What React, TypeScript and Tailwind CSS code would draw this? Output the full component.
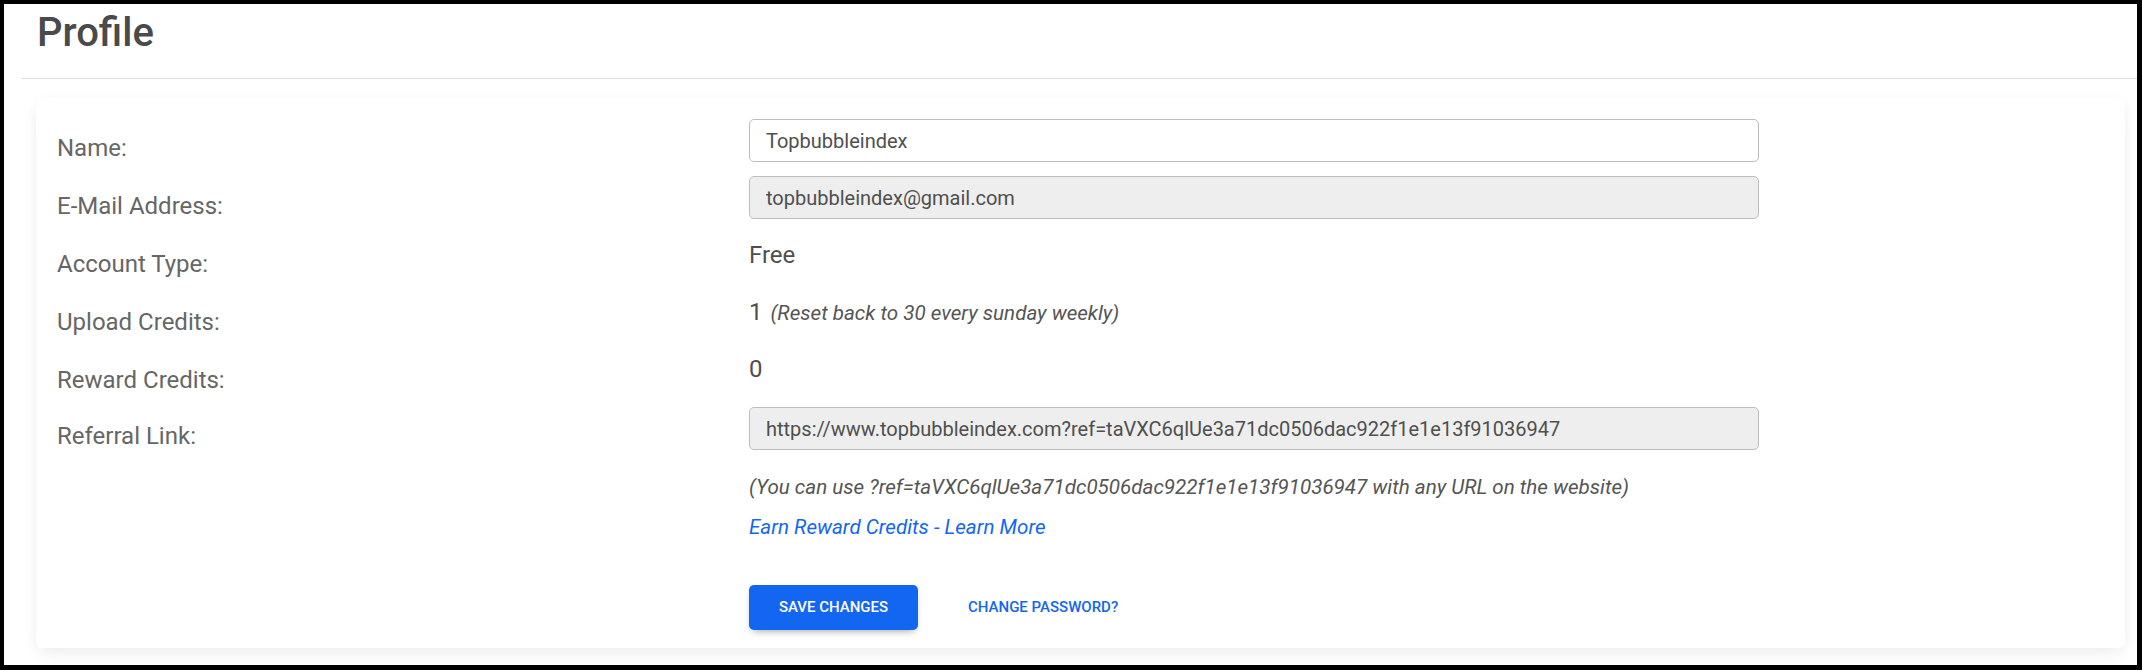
import React from "react";

type Row = {
  label: string;
  value: React.ReactNode;
  labelPad: string;
};

function TextField({ value, disabled = false }: { value: string; disabled?: boolean }) {
  return (
    <input
      type="text"
      defaultValue={value}
      readOnly={disabled}
      className={`h-[43px] w-[1010px] rounded-[5px] border border-[#bdbdbd] px-[16px] text-[20px] text-[#4f4f4f] outline-none ${
        disabled ? "bg-[#eeeeee]" : "bg-white"
      }`}
    />
  );
}

export default function App() {
  const referralCode = "taVXC6qlUe3a71dc0506dac922f1e1e13f91036947";

  const rows: Row[] = [
    { label: "Name:", labelPad: "pt-[11px]", value: <TextField value="Topbubbleindex" /> },
    {
      label: "E-Mail Address:",
      labelPad: "pt-[12px]",
      value: <TextField value="topbubbleindex@gmail.com" disabled />,
    },
    { label: "Account Type:", labelPad: "pt-[13px]", value: <span className="text-[24px]">Free</span> },
    {
      label: "Upload Credits:",
      labelPad: "pt-[14px]",
      value: (
        <span className="flex items-baseline gap-[8px]">
          <span className="text-[24px]">1</span>
          <span className="text-[20.6px] italic text-[#555]">(Reset back to 30 every sunday weekly)</span>
        </span>
      ),
    },
    { label: "Reward Credits:", labelPad: "pt-[15px]", value: <span className="text-[24px]">0</span> },
    {
      label: "Referral Link:",
      labelPad: "pt-[11px]",
      value: <TextField value={`https://www.topbubbleindex.com?ref=${referralCode}`} disabled />,
    },
  ];

  return (
    <div
      className="h-[670px] w-[2142px] bg-black pb-[5px] pl-[4px] pr-[5px] pt-[4px]"
      style={{ fontFamily: "Roboto, 'Noto Sans', Arial, sans-serif" }}
    >
      <div className="flex h-full flex-col bg-white">
        <div className="ml-[17px] h-[75px] border-b border-[#e0e0e0] pl-[16px] pt-[5px]">
          <h1 className="text-[40px] font-medium leading-[48px] text-[#4a4a4a]">Profile</h1>
        </div>

        <div className="flex min-h-0 flex-1 pb-[17px] pl-[32px] pr-[12px] pt-[19px]">
          <section className="flex-1 rounded-[6px] bg-white pl-[21px] pt-[21px] shadow-[0_2px_15px_-3px_rgba(0,0,0,0.07),0_10px_20px_-2px_rgba(0,0,0,0.04)]">
            <div className="flex flex-col gap-[14px]">
              {rows.map((row, i) => (
                <div
                  key={row.label}
                  className={`grid h-[43px] grid-cols-[692px_1010px] items-start ${i === rows.length - 1 ? "mt-[3px]" : ""}`}
                >
                  <div className={`h-[43px] text-[24px] leading-[36px] text-[#666666] ${row.labelPad}`}>{row.label}</div>
                  <div className="flex h-[43px] items-center text-[#4f4f4f]">{row.value}</div>
                </div>
              ))}
            </div>

            <div className="ml-[692px] mt-[22px]">
              <p className="text-[20.6px] italic leading-[30px] text-[#555]">
                (You can use ?ref={referralCode} with any URL on the website)
              </p>
              <a href="#" className="mt-[10px] block w-fit text-[20.6px] italic leading-[30px] text-[#1266f1]">
                Earn Reward Credits - Learn More
              </a>

              <div className="mt-[43px] flex items-center gap-[50px]">
                <button
                  type="button"
                  className="h-[45px] w-[169px] rounded-[5px] bg-[#1266f1] text-[15px] font-medium uppercase text-white shadow-[0_4px_9px_-4px_rgba(0,0,0,0.45)]"
                >
                  Save Changes
                </button>
                <button type="button" className="text-[15px] font-medium uppercase text-[#1266f1]">
                  Change Password?
                </button>
              </div>
            </div>
          </section>
        </div>
      </div>
    </div>
  );
}
